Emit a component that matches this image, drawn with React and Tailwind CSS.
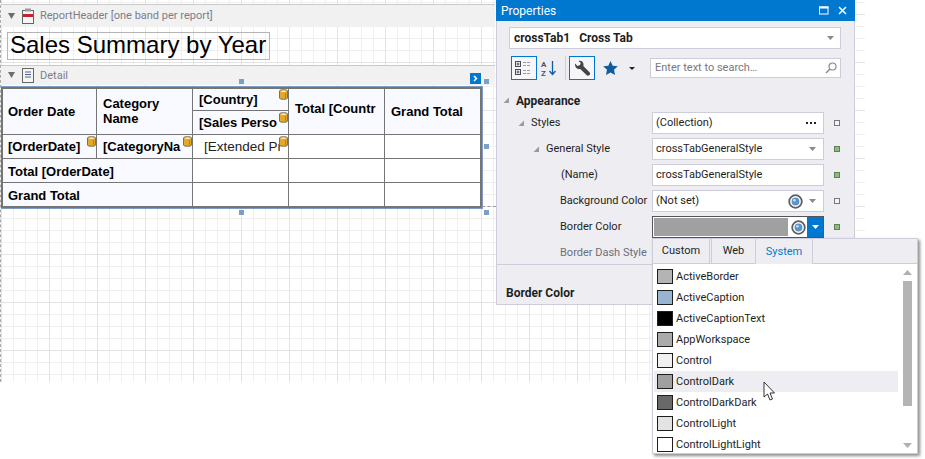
import React from "react";

const LIST_ITEMS = [
  { name: "ActiveBorder", color: "bg-[#b4b4b4]" },
  { name: "ActiveCaption", color: "bg-[#99b4d1]" },
  { name: "ActiveCaptionText", color: "bg-[#000000]" },
  { name: "AppWorkspace", color: "bg-[#ababab]" },
  { name: "Control", color: "bg-[#f0f0f0]" },
  { name: "ControlDark", color: "bg-[#a0a0a0]", hover: true },
  { name: "ControlDarkDark", color: "bg-[#696969]" },
  { name: "ControlLight", color: "bg-[#e3e3e3]" },
  { name: "ControlLightLight", color: "bg-[#ffffff]" },
];

const Triangle = ({ className = "" }) => (
  <svg width="9" height="9" viewBox="0 0 9 9" className={className}>
    <path d="M1 1h7L4.500 7z" fill="#6d6d6d" />
  </svg>
);

// the small grey corner arrow of expanded property rows
const Expand = () => (
  <svg width="7" height="7" viewBox="0 0 7 7" className="shrink-0">
    <path d="M6 0.500V6H0.500z" fill="#9a9aa0" />
  </svg>
);

const ComboArrow = ({ color = "#8a8a8a" }) => (
  <svg width="7" height="4" viewBox="0 0 7 4" className="shrink-0">
    <path d="M0 0h7L3.500 4z" fill={color} />
  </svg>
);

const Db = ({ className = "" }) => (
  <svg width="9" height="11" viewBox="0 0 9 11" className={`absolute ${className}`}>
    <path d="M.5 2C.5.3 8.500.3 8.500 2v7c0 1.700-8 1.700-8 0z" fill="#e3a92b" stroke="#77715e" />
    <path d="M1.500 2.200c0-1 6-1 6 0s-6 1-6 0z" fill="#fbeeb8" />
    <path d="M6.500 4v5.500" stroke="#b57f17" />
  </svg>
);

const Handle = ({ className = "" }) => <span className={`absolute w-[5px] h-[5px] bg-[#7f9ec6] ${className}`} />;

const Dot = ({ green }) => (
  <span className={`w-[6px] h-[6px] border shrink-0 ${green ? "bg-[#8fbc7a] border-[#5f7f55]" : "bg-[#f4f4f6] border-[#77777c]"}`} />
);

const ColorEye = () => (
  <svg width="15" height="15" viewBox="0 0 15 15" className="shrink-0">
    <circle cx="7.500" cy="7.500" r="6.300" fill="#fff" stroke="#5e5e5e" strokeWidth="1.800" />
    <circle cx="7.500" cy="7.500" r="3.900" fill="#5b93cc" />
    <circle cx="6.400" cy="6.300" r="1.300" fill="#cfe2f5" />
  </svg>
);

const Cell = ({ className = "px-[6px]", children }) => (
  <div className={`relative flex items-center whitespace-nowrap overflow-hidden bg-[#f8faff] ${className}`}>{children}</div>
);

const Blank = () => <div className="bg-white" />;

const PropRow = ({ label, indent, expand, dim, dot, children }) => (
  <div className="flex items-center h-[26px]">
    <div className={`w-[149px] flex items-center gap-[6px] shrink-0 whitespace-nowrap ${indent} ${dim ? "text-[#6d6d78]" : ""}`}>
      {expand && <Expand />}
      <span>{label}</span>
    </div>
    {children}
    {dot !== undefined && (
      <div className="w-[25px] flex justify-center">
        <Dot green={dot} />
      </div>
    )}
  </div>
);

const ValueBox = ({ children, className = "" }) => (
  <div className={`w-[172px] h-[22px] bg-white border border-[#ccccda] flex items-center pl-[3px] pr-[7px] ${className}`}>{children}</div>
);

export default function App() {
  return (
    <div className="relative w-[925px] h-[459px] overflow-hidden bg-white text-[11px] leading-[18px] text-[#1e1e1e] font-['Roboto',sans-serif]">
      {/* design surface */}
      <div className="w-[865px] h-[382px] pt-[4px] border-l border-dashed border-[#a9a9a9] bg-white bg-[linear-gradient(#e3e3e3_1px,transparent_1px),linear-gradient(90deg,#e3e3e3_1px,transparent_1px),linear-gradient(#f0f0f0_1px,transparent_1px),linear-gradient(90deg,#f0f0f0_1px,transparent_1px)] [background-size:48px_48px,48px_48px,12px_12px,12px_12px] [background-position:0_14px,0_0,0_2px,0_0]">
        <div className="h-[23px] w-[494px] flex items-center gap-[5px] pl-[6px] bg-[#f1f1f1] border-t border-[#c9c9c9] text-[#7d7d8a] whitespace-nowrap">
          <Triangle />
          <svg width="12" height="16" viewBox="0 0 12 16" className="ml-[1px]">
            <rect x="0.500" y="2.500" width="11" height="13" fill="#f5f5f5" stroke="#666" />
            <rect x="3" y="0.500" width="6" height="3" fill="#999" />
            <rect x="1" y="6" width="10" height="3" fill="#c8202c" />
          </svg>
          <span className="ml-[1px]">ReportHeader [one band per report]</span>
        </div>

        <div className="h-[38px] w-[494px] pt-[5px] pl-[6px]">
          <div className="w-[263px] h-[28px] border border-[#b5b5b5] flex items-center pl-[2px] pb-[2px] text-[24px] leading-[36px] text-black whitespace-nowrap font-['Liberation_Sans',sans-serif]">
            Sales Summary by Year
          </div>
        </div>

        <div className="h-[20px] w-[494px] flex items-center gap-[5px] pl-[6px] bg-[#f1f1f1] border-t border-[#c9c9c9] text-[#7d7d8a]">
          <Triangle />
          <svg width="12" height="15" viewBox="0 0 12 15" className="ml-[1px]">
            <rect x="0.500" y="0.500" width="11" height="14" fill="#f5f5f5" stroke="#666" />
            <path d="M3 4h6M3 6.500h6M3 9h6" stroke="#55608a" />
          </svg>
          <span className="ml-[1px]">Detail</span>
        </div>

        {/* cross tab */}
        <div className="relative w-[482px] mt-[1px] border-t border-r border-b border-[#7f9dc4]">
          <div className="grid grid-cols-[93px_95px_95px_95px_95px] grid-rows-[21px_23px_23px_23px_23px] gap-px bg-[#757575] border-2 border-[#757575] text-[13px] leading-[20px] font-bold text-black font-['Liberation_Sans',sans-serif]">
            <Cell className="row-span-2 px-[5px]">Order Date</Cell>
            <Cell className="row-span-2 whitespace-normal leading-[15px] pb-[2px] px-[6px]">
              Category<br />Name
            </Cell>
            <Cell>
              [Country]
              <Db className="right-0 top-0" />
            </Cell>
            <Cell className="row-span-2 pb-[6px] px-[6px]">Total [Countr</Cell>
            <Cell className="row-span-2 pt-[1px] px-[6px]">Grand Total</Cell>
            <Cell>
              [Sales Perso
              <Db className="right-0 top-[1px]" />
            </Cell>

            <Cell className="px-[5px]">
              [OrderDate]
              <Db className="right-0 top-[1px]" />
            </Cell>
            <Cell>
              [CategoryNa
              <Db className="right-0 top-[1px]" />
            </Cell>
            <div className="relative bg-white flex items-center pl-[11px] font-normal text-[13.500px] text-[#222] whitespace-nowrap overflow-hidden">
              [Extended Pr
              <Db className="right-0 top-[1px]" />
            </div>
            <Blank />
            <Blank />

            <Cell className="col-span-2 px-[5px] pt-[2px]">Total [OrderDate]</Cell>
            <Blank />
            <Blank />
            <Blank />

            <Cell className="col-span-2 px-[5px] pt-[2px]">Grand Total</Cell>
            <Blank />
            <Blank />
            <Blank />
          </div>

          {/* smart tag and sizing handles */}
          <span className="absolute right-[1px] top-[-14px] w-[11px] h-[11px] bg-[#0078d0] text-white flex items-center justify-center">
            <svg width="7" height="7" viewBox="0 0 7 7">
              <path d="M2 1l2.500 2.500L2 6" fill="none" stroke="#fff" strokeWidth="1.500" />
            </svg>
          </span>
          <Handle className="left-[238px] top-[-8px]" />
          <Handle className="right-[-7px] top-[-8px]" />
          <Handle className="right-[-7px] top-[57px]" />
          <Handle className="left-[238px] bottom-[-7px]" />
          <Handle className="right-[-7px] bottom-[-7px]" />
          <span className="absolute left-[481px] bottom-[1px] w-[14px] border-t border-dashed border-[#9a9a9a]" />
        </div>
      </div>

      {/* properties window */}
      <div className="absolute left-[496px] top-0 w-[359px] h-[305px] bg-[#eeeef2] border-x border-b border-[#ccccda]">
        <div className="h-[21px] -mx-px bg-[#0078d0] text-white text-[12px] flex items-center justify-between pl-[5px] pr-[8px]">
          <span>Properties</span>
          <span className="flex items-center gap-[9px]">
            <svg width="10" height="9" viewBox="0 0 10 9">
              <rect x="0.500" y="1" width="8.500" height="7" fill="none" stroke="#fff" />
              <rect x="0" y="0.500" width="9.500" height="2" fill="#fff" />
            </svg>
            <svg width="9" height="9" viewBox="0 0 9 9">
              <path d="M1 1l7 7M8 1l-7 7" stroke="#fff" strokeWidth="1.500" />
            </svg>
          </span>
        </div>

        <div className="pl-[12px] pr-[13px] pt-[6px]">
          <div className="h-[22px] bg-white border border-[#ccccda] flex items-center justify-between pl-[4px] pr-[6px]">
            <span className="font-bold text-[12px]">crossTab1&nbsp;&nbsp; Cross Tab</span>
            <ComboArrow />
          </div>

          <div className="h-[24px] mt-[7px] flex items-center">
            <span className="ml-[2px] w-[26px] h-[24px] border border-[#0078d0] bg-[#f6f6f9] flex items-center justify-center">
              <svg width="18" height="16" viewBox="0 0 18 16">
                <g fill="none" stroke="#4a4a55">
                  <rect x="0.500" y="1.500" width="5" height="5" />
                  <rect x="0.500" y="9.500" width="5" height="5" />
                  <path d="M1.500 4h3M3 2.500v3M1.500 12h3M3 10.500v3" />
                </g>
                <path d="M8 2.500h3M12 2.500h3M8 5.500h3M12 5.500h3M8 10.500h3M12 10.500h3M8 13.500h3M12 13.500h3" stroke="#9a9aa4" />
              </svg>
            </span>
            <span className="w-[24px] flex justify-center">
              <svg width="16" height="17" viewBox="0 0 16 17">
                <text x="0" y="7" fontSize="8" fontWeight="700" fill="#555">A</text>
                <text x="0" y="16" fontSize="8" fontWeight="700" fill="#555">Z</text>
                <path d="M11.500 1v13M8.500 11l3 3.500 3-3.500" fill="none" stroke="#0f5c9e" strokeWidth="1.300" />
              </svg>
            </span>
            <span className="w-px h-[24px] bg-[#d0d0d8] ml-[4px] mr-[3px]" />
            <span className="w-[26px] h-[24px] border border-[#0078d0] bg-[#f6f6f9] flex items-center justify-center">
              <svg width="17" height="17" viewBox="0 0 17 17">
                <path d="M1 3.500 3.500 6 6 5l.8-2L4.500 1C7 .2 9.500 1.500 9.500 4.500c0 .6 0 1-.2 1.500l6.200 6.200c.9.900.9 2-.1 2.900-.9.900-2 .9-2.900 0L6.300 9C3.500 9.700.6 7.500 1 3.500z" fill="#444" />
              </svg>
            </span>
            <span className="w-[27px] flex justify-center ml-[2px]">
              <svg width="15" height="14" viewBox="0 0 15 14">
                <path d="M7.500 0l2.200 4.700 5.100.6-3.800 3.500 1 5.100-4.500-2.500-4.500 2.500 1-5.100L.2 5.300l5.100-.6z" fill="#0f5c9e" />
              </svg>
            </span>
            <span className="ml-[5px]">
              <svg width="6" height="3" viewBox="0 0 6 3" className="block">
                <path d="M0 0h6L3 3z" fill="#222" />
              </svg>
            </span>
            <div className="ml-[15px] w-[191px] h-[20px] bg-white border border-[#ccccda] flex items-center justify-between pl-[4px] pr-[3px] text-[#77777f]">
              <span>Enter text to search…</span>
              <svg width="12" height="12" viewBox="0 0 12 12">
                <circle cx="7.500" cy="4.500" r="3.500" fill="none" stroke="#8a8a8a" strokeWidth="1.200" />
                <path d="M5 7l-4 4" stroke="#8a8a8a" strokeWidth="1.500" />
              </svg>
            </div>
          </div>
        </div>

        <div className="pl-[6px] pt-[10px]">
          <div className="h-[20px] pt-[1px] flex items-center gap-[6px] font-bold text-[12px]">
            <Expand />
            <span>Appearance</span>
          </div>
          <PropRow label="Styles" indent="pl-[15px]" expand dot={false}>
            <ValueBox className="justify-between">
              <span>(Collection)</span>
              <svg width="10" height="3" viewBox="0 0 10 3">
                <path d="M0 0h2v2H0zM4 0h2v2H4zM8 0h2v2H8z" fill="#222" />
              </svg>
            </ValueBox>
          </PropRow>
          <PropRow label="General Style" indent="pl-[30px]" expand dot>
            <ValueBox className="justify-between">
              <span>crossTabGeneralStyle</span>
              <ComboArrow />
            </ValueBox>
          </PropRow>
          <PropRow label="(Name)" indent="pl-[58px]" dot>
            <ValueBox>crossTabGeneralStyle</ValueBox>
          </PropRow>
          <PropRow label="Background Color" indent="pl-[57px]" dot={false}>
            <ValueBox className="justify-between">
              <span>(Not set)</span>
              <span className="flex items-center gap-[6px]">
                <ColorEye />
                <ComboArrow />
              </span>
            </ValueBox>
          </PropRow>
          <PropRow label="Border Color" indent="pl-[57px]" dot>
            <div className="w-[172px] h-[22px] bg-white border border-[#555] flex items-center pl-[1px]">
              <span className="w-[134px] h-[18px] bg-[#a0a0a0]" />
              <span className="ml-[3px]">
                <ColorEye />
              </span>
              <span className="ml-auto w-[16px] h-[20px] bg-[#0078d0] flex items-center justify-center">
                <ComboArrow color="#fff" />
              </span>
            </div>
          </PropRow>
          <PropRow label="Border Dash Style" indent="pl-[57px]" dim />
        </div>

        <div className="mt-[-2px] border-t border-[#ccccda] pl-[9px] pt-[19px] font-bold text-[12px]">Border Color</div>
      </div>

      {/* colour picker popup */}
      <div className="absolute left-[652px] top-[238px] w-[266px] h-[216px] bg-white border border-[#ccccda] shadow-[2px_2px_3px_rgba(0,0,0,0.45)]">
        <div className="h-[25px] flex bg-[#eeeef2] border-b border-[#ccccda]">
          <span className="w-[57px] flex items-center justify-center border-r border-[#ccccda]">Custom</span>
          <span className="w-[45px] flex items-center justify-center border-x border-[#ccccda] ml-[1px]">Web</span>
          <span className="w-[57px] -mb-px bg-[#eeeef2] flex items-center justify-center border-r border-[#ccccda] text-[#0078d0]">System</span>
        </div>
        <div className="flex">
          <div className="w-[245px] pl-[1px] pt-[2px]">
            {LIST_ITEMS.map((item) => (
              <div key={item.name} className={`h-[21px] flex items-center gap-[3px] pl-[3px] whitespace-nowrap ${item.hover ? "bg-[#eeeef2]" : ""}`}>
                <span className={`w-[16px] h-[15px] border border-[#1e1e1e] ${item.color}`} />
                <span>{item.name}</span>
              </div>
            ))}
          </div>
          <div className="ml-[5px] w-[9px] flex flex-col items-center pt-[6px]">
            <svg width="9" height="5" viewBox="0 0 9 5">
              <path d="M4.500 0L9 5H0z" fill="#b0b0b0" />
            </svg>
            <span className="w-[9px] h-[125px] mt-[6px] bg-[#b4b4b4]" />
            <svg width="9" height="5" viewBox="0 0 9 5" className="mt-[37px]">
              <path d="M0 0h9L4.500 5z" fill="#b0b0b0" />
            </svg>
          </div>
        </div>
      </div>

      {/* mouse pointer */}
      <svg width="14" height="21" viewBox="0 0 14 21" className="absolute left-[763px] top-[381px]">
        <path d="M1 1v15l3.500-3 2.500 6 2.500-1-2.500-6h4.500z" fill="#fff" stroke="#333" />
      </svg>
    </div>
  );
}
